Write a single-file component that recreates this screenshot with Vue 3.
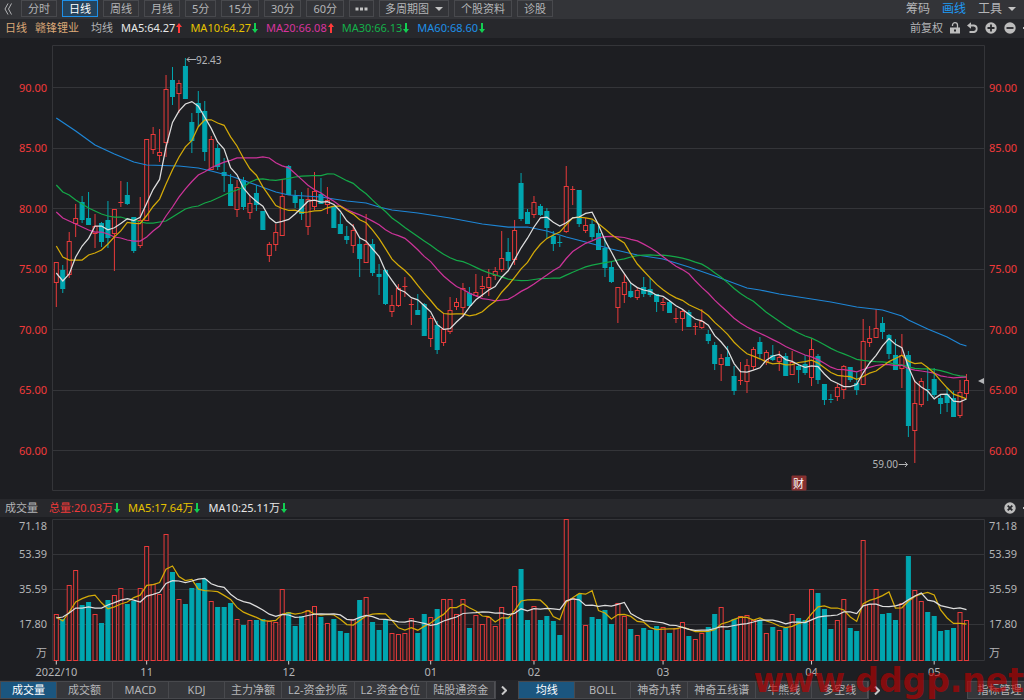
<script setup>
const STEP = 6.455
const X0 = 56.3
const xAt = (i) => X0 + i * STEP

// direction, high, body top, body bottom, low (plot coordinates)
const candleSource = `
R 262 262 282 306 G 265 270 288 292 R 232 241 274 277 R 204 218 223 236 G 196 202 219 222
G 192 218 224 224 R 214 226 233 247 G 222 223 241 246 G 201 220 237 247 R 209 209 233 270
R 181 202 202 206 G 182 195 203 204 G 217 217 250 252 R 197 220 245 247 R 139 139 220 220
R 127 134 149 153 R 129 152 155 161 R 75 89 142 156 G 67 80 96 104 R 80 83 93 112
G 58 66 98 98 G 113 122 140 152 G 91 103 112 126 G 101 111 151 160 R 136 139 169 169
G 144 148 166 169 G 158 172 175 191 G 174 184 205 205 R 180 187 209 216 G 177 180 206 209
R 195 203 212 218 G 185 193 204 210 G 211 211 229 229 R 242 244 255 261 R 224 232 244 250
R 180 196 235 235 G 165 166 194 194 G 190 196 202 207 G 192 199 213 219 R 188 199 226 234
R 172 191 206 209 G 178 194 203 203 R 187 200 204 213 G 206 206 227 227 G 213 224 233 233
G 226 236 239 243 R 224 230 245 252 G 237 244 258 276 R 214 244 262 262 G 239 244 272 275
G 264 274 276 294 G 269 270 303 304 R 295 305 311 316 R 284 288 305 306 R 277 286 286 296
R 299 304 304 324 G 294 310 314 314 G 303 304 335 335 R 316 318 338 346 G 321 325 349 353
R 313 329 342 345 R 297 310 331 333 R 298 302 306 309 R 283 288 307 316 G 287 293 305 307
R 274 292 295 295 R 276 286 288 296 R 269 277 287 295 R 267 271 275 279 R 231 258 269 271
G 238 252 260 268 R 220 230 259 264 G 173 183 218 220 G 209 212 223 223 R 196 202 214 217
G 204 206 214 215 G 208 211 227 237 G 231 236 243 250 G 236 242 242 246 R 166 186 231 232
R 186 189 189 204 G 190 190 223 226 R 218 225 230 232 G 220 224 236 239 G 224 233 249 249
G 237 248 267 276 G 261 267 281 282 R 287 287 307 322 R 274 282 294 302 G 283 291 296 297
R 287 290 297 299 G 277 287 293 296 G 278 289 294 296 G 294 294 301 311 R 298 302 304 310
G 300 302 312 312 R 308 318 318 322 R 309 311 318 330 G 310 312 326 326 R 323 326 326 334
R 309 321 327 328 G 330 334 340 343 G 342 345 363 369 R 354 358 364 380 G 346 357 365 365
G 366 376 390 394 R 362 380 380 384 R 359 365 381 392 R 347 349 366 369 G 337 342 353 358
R 350 352 361 364 G 345 355 359 360 R 351 357 361 370 G 353 356 375 375 R 351 362 374 374
G 364 366 369 382 G 355 364 372 374 R 338 349 377 385 G 354 356 379 383 G 384 384 399 404
G 394 399 400 402 R 384 387 396 400 R 365 366 389 398 G 367 367 379 381 G 372 383 389 394
R 319 341 384 384 R 326 338 342 346 R 309 328 337 337 G 317 323 331 338 G 334 335 353 358
G 339 355 369 369 R 334 355 368 387 G 351 355 425 436 R 380 403 430 462 R 378 381 404 406
G 368 389 389 400 G 368 379 394 396 G 395 398 403 413 G 388 394 402 411 G 391 398 416 416
R 380 392 415 417 R 374 380 393 397`.trim().split(/\s+/)

const volumeTops = [
  614, 619, 585, 570, 605, 602, 614, 623, 600, 595, 588, 604, 601, 588, 546, 584, 594, 534, 572, 599,
  604, 588, 583, 579, 601, 607, 607, 603, 619, 625, 620, 620, 619, 621, 622, 589, 612, 626, 616, 610,
  606, 617, 623, 619, 631, 633, 619, 600, 597, 622, 630, 620, 633, 634, 633, 618, 633, 614, 617, 609,
  599, 599, 614, 599, 628, 615, 624, 617, 626, 607, 617, 586, 569, 620, 606, 620, 616, 621, 635, 519,
  598, 594, 625, 617, 619, 610, 624, 603, 616, 629, 635, 628, 630, 626, 627, 633, 628, 622, 636, 639,
  633, 627, 614, 607, 630, 619, 616, 615, 620, 620, 633, 627, 630, 628, 614, 618, 620, 589, 593, 609,
  629, 620, 599, 628, 631, 540, 604, 589, 614, 613, 620, 603, 556, 590, 601, 612, 616, 631, 630, 628,
  612, 620
]

const candles = volumeTops.map((v, i) => {
  const [dir, high, top, bottom, low] = candleSource.slice(i * 5, i * 5 + 5)
  return { x: xAt(i), up: dir === 'R', high: +high, top: +top, bottom: +bottom, low: +low, v }
})
const closes = candles.map((c) => (c.up ? c.top : c.bottom) + 0.4)

// Moving average; seed values cover the bars before the window fills up.
function average(values, n, seed) {
  return values.map((_, i) => {
    if (i < seed.length) return seed[i]
    return values.slice(i - n + 1, i + 1).reduce((a, b) => a + b, 0) / n
  })
}
const toPoints = (ys) => ys.map((y, i) => `${xAt(i).toFixed(1)},${y.toFixed(1)}`).join(' ')

const ma60 = [[0, 118], [3, 131], [6, 145], [9, 154], [12, 162], [14, 165], [19, 166], [22, 168], [24, 171],
  [27, 176], [31, 185], [34, 192], [36, 195], [41, 197], [45, 201], [48, 203], [50, 207], [52, 210], [56, 213],
  [61, 218], [66, 224], [70, 227], [73, 227], [76, 231], [79, 237], [82, 242], [86, 249], [90, 255], [94, 259],
  [98, 267], [102, 276], [107, 288], [109, 290], [112, 294], [116, 298], [120, 302], [124, 307], [128, 310],
  [131, 316], [132, 320], [135, 329], [138, 337], [140, 344], [141, 346]]
  .map(([i, y]) => `${xAt(i).toFixed(1)},${y}`).join(' ')

const priceLines = [
  { cls: 'blue', points: ma60 },
  {
    cls: 'green',
    points: toPoints(average(closes, 30, [185, 192, 195, 200, 204, 208, 211, 214, 216, 217, 217, 219, 220, 222,
      223, 223, 222, 221, 217, 213, 209, 207, 206, 203, 201, 198, 195, 192, 190, 187]))
  },
  {
    cls: 'pink',
    points: toPoints(average(closes, 20, [212, 218, 221, 224, 227, 230, 232, 232, 234, 237, 238, 240, 241, 241,
      237, 231, 226, 216, 207]))
  },
  { cls: 'yellow', points: toPoints(average(closes, 10, [246, 257, 260, 260, 260, 255, 253, 250, 244])) },
  { cls: 'white', points: toPoints(average(closes, 5, [273, 281, 274, 257])) }
]
const volumeLines = [
  { cls: 'yellow', points: toPoints(average(volumeTops, 5, [617, 621, 612, 602])) },
  { cls: 'white', points: toPoints(average(volumeTops, 10, [618, 617, 613, 608, 608, 607, 608, 608, 605])) }
]

const priceTicks = [90, 85, 80, 75, 70, 65, 60].map((p) => ({ label: p.toFixed(2), y: 87.5 + (90 - p) * 12.1 }))
const priceTop = (y) => ({ top: ((y - 38) / 461) * 100 + '%' })
const volumeTicks = [['71.18', 526], ['53.39', 554], ['35.59', 589], ['17.80', 624], ['万', 653]]
const volumeTop = (y) => ({ top: ((y - 517) / 163) * 100 + '%' })
const plotLeft = (x) => ({ left: ((x - 52) / 933) * 100 + '%' })
const months = [['2022/10', 0], ['11', 14], ['12', 36], ['01', 58], ['02', 74], ['03', 94], ['04', 117], ['05', 136]]

const periods = ['分时', '日线', '周线', '月线', '5分', '15分', '30分', '60分']
const averages = [
  ['MA5:64.27', 'white', true], ['MA10:64.27', 'yellow', false], ['MA20:66.08', 'pink', true],
  ['MA30:66.13', 'green', false], ['MA60:68.60', 'blue', false]
]
const volumeStats = [['总量:20.03万', 'red'], ['MA5:17.64万', 'yellow'], ['MA10:25.11万', 'white']]
const lowerTabs = ['成交量', '成交额', 'MACD', 'KDJ', '主力净额', 'L2-资金抄底', 'L2-资金仓位', '陆股通资金']
const upperTabs = ['均线', 'BOLL', '神奇九转', '神奇五线谱', '牛熊线', '多空线']
</script>

<template>
  <main class="terminal">
    <nav class="toolbar">
      <button class="plain collapse" aria-label="收起">
        <svg width="8" height="12" viewBox="0 0 8 12"><path d="M4 0.5 L1 6 L4 11.5 M7.5 0.5 L4.500 6 L7.500 11.5" /></svg>
      </button>
      <button v-for="p in periods" :key="p" class="period" :class="{ active: p === '日线' }">{{ p }}</button>
      <button class="period more" aria-label="更多">
        <svg class="dots" width="13" height="4" viewBox="0 0 13 4"><path d="M0.500 0.500h3v3h-3z M5 0.500h3v3h-3z M9.500 0.500h3v3h-3z" /></svg>
      </button>
      <button class="period menu">多周期图<i class="caret"></i></button>
      <button class="period">个股资料</button>
      <button class="period">诊股</button>
      <div class="tools">
        <button class="plain">筹码</button>
        <button class="plain on">画线</button>
        <button class="plain">工具<i class="caret"></i></button>
      </div>
    </nav>

    <header class="info price-info">
      <span class="gold">日线</span>
      <span class="gold name">赣锋锂业</span>
      <span class="label">均线</span>
      <span v-for="[text, color, up] in averages" :key="text" class="stat" :class="color">{{ text
        }}<svg class="arrow" :class="up ? 'up' : 'down'" width="6" height="10" viewBox="0 0 6 10"><path :d="up ? 'M3 0 L6 4 H4 V10 H2 V4 H0Z' : 'M3 10 L6 6 H4 V0 H2 V6 H0Z'" /></svg></span>
      <div class="actions">
        <button class="plain">前复权</button>
        <button class="plain" aria-label="锁定">
          <svg width="10" height="12" viewBox="0 0 10 12"><path d="M2.500 4 V3 A2.500 2.300 0 0 1 7.500 3 V6" fill="none" stroke="#bdbdbd" stroke-width="1.300" /><path d="M0 5.500H10V11.500H0Z M4 7.500V9.500H6V7.500Z" fill="#bdbdbd" fill-rule="evenodd" /></svg>
        </button>
        <button class="plain" aria-label="撤销">
          <svg width="11" height="12" viewBox="0 0 11 12"><path d="M2 3.500H7A3.300 3.300 0 0 1 7 10H2.500" fill="none" stroke="#bdbdbd" stroke-width="1.800" /><path d="M0 3.500L4 0.300V6.700Z" fill="#bdbdbd" /></svg>
        </button>
        <button class="plain" aria-label="放大">
          <svg width="12" height="12" viewBox="0 0 12 12"><circle cx="6" cy="6" r="5.700" fill="#bdbdbd" /><path d="M6 2.500V9.500M2.500 6H9.500" stroke="#27282c" stroke-width="1.800" /></svg>
        </button>
        <button class="plain" aria-label="缩小">
          <svg width="12" height="12" viewBox="0 0 12 12"><circle cx="6" cy="6" r="5.700" fill="#bdbdbd" /><path d="M2.500 6H9.500" stroke="#27282c" stroke-width="1.800" /></svg>
        </button>
        <i class="edge"></i>
      </div>
    </header>

    <section class="chart">
      <div class="axis left red">
        <span v-for="t in priceTicks" :key="t.label" :style="priceTop(t.y)">{{ t.label }}</span>
      </div>
      <div class="plot">
        <svg class="canvas" viewBox="52 38 933 461" preserveAspectRatio="none">
          <path class="grid" d="M52.500 45.500H984.500V490.500H52.500Z" />
          <path v-for="t in priceTicks" :key="t.label" class="grid" :d="`M52 ${Math.floor(t.y) + 0.5}H984`" />
          <g v-for="(c, i) in candles" :key="i" :class="c.up ? 'rise' : 'fall'">
            <path :d="`M${c.x} ${c.high}V${c.top + 0.5}M${c.x} ${c.bottom + 0.5}V${c.low + 1}`" />
            <rect v-if="c.bottom - c.top > 1" :x="c.x - 2" :y="c.top + 0.5" width="4" :height="c.bottom - c.top" />
            <path v-else :d="`M${c.x - 2.5} ${c.top + 0.5}h5`" />
          </g>
          <polyline v-for="l in priceLines" :key="l.cls" class="line" :class="l.cls" :points="l.points" />
        </svg>
        <span class="mark high" :style="{ ...priceTop(60), ...plotLeft(186) }"><svg width="10" height="7" viewBox="0 0 10 7"><path d="M10 3.500H1M3.500 1L1 3.500L3.500 6" /></svg>92.43</span>
        <span class="mark low" :style="{ ...priceTop(464), ...plotLeft(908) }">59.00<svg width="10" height="7" viewBox="0 0 10 7"><path d="M0 3.500H9M6.500 1L9 3.500L6.500 6" /></svg></span>
        <span class="report" :style="{ ...priceTop(483), ...plotLeft(798.5) }">财</span>
        <i class="pointer" :style="priceTop(380.5)"></i>
      </div>
      <div class="axis right red">
        <span v-for="t in priceTicks" :key="t.label" :style="priceTop(t.y)">{{ t.label }}</span>
      </div>
    </section>

    <header class="info volume-info">
      <span class="label first">成交量</span>
      <span v-for="[text, color] in volumeStats" :key="text" class="stat" :class="color">{{ text
        }}<svg class="arrow down" width="6" height="10" viewBox="0 0 6 10"><path d="M3 10 L6 6 H4 V0 H2 V6 H0Z" /></svg></span>
      <div class="actions">
        <button class="plain" aria-label="关闭">
          <svg width="12" height="12" viewBox="0 0 12 12"><circle cx="6" cy="6" r="5.700" fill="#bdbdbd" /><path d="M3.700 3.700L8.300 8.300M8.300 3.700L3.700 8.300" stroke="#27282c" stroke-width="1.800" /></svg>
        </button>
        <i class="edge"></i>
      </div>
    </header>

    <section class="chart">
      <div class="axis left">
        <span v-for="[t, y] in volumeTicks" :key="t" :style="volumeTop(y)">{{ t }}</span>
      </div>
      <div class="plot">
        <svg class="canvas" viewBox="52 517 933 163" preserveAspectRatio="none">
          <path class="grid" d="M52.500 519.500H984.500V660.500H52.500Z M52 554.500H984 M52 589.500H984 M52 624.500H984" />
          <g v-for="(c, i) in candles" :key="i" :class="c.up ? 'rise' : 'fall'">
            <rect :x="c.x - 2" :y="c.v + 0.5" width="4" :height="660 - c.v" />
          </g>
          <path v-for="[m, i] in months" :key="m" class="tick" :d="`M${xAt(i)} 661V664.500`" />
          <polyline v-for="l in volumeLines" :key="l.cls" class="line" :class="l.cls" :points="l.points" />
        </svg>
        <span v-for="[m, i] in months" :key="m" class="month" :style="{ ...volumeTop(672), ...plotLeft(xAt(i)) }">{{ m }}</span>
      </div>
      <div class="axis right">
        <span v-for="[t, y] in volumeTicks" :key="t" :style="volumeTop(y)">{{ t }}</span>
      </div>
    </section>

    <nav class="tabs">
      <button v-for="t in lowerTabs" :key="t" :class="{ active: t === '成交量' }">{{ t }}</button>
      <button class="next" aria-label="更多副图"><svg width="6" height="9" viewBox="0 0 6 9"><path d="M1 0.500L5 4.500L1 8.500" /></svg></button>
      <button v-for="t in upperTabs" :key="t" :class="{ active: t === '均线' }">{{ t }}</button>
      <button class="next" aria-label="更多主图"><svg width="6" height="9" viewBox="0 0 6 9"><path d="M1 0.500L5 4.500L1 8.500" /></svg></button>
      <button class="manage">指标管理</button>
    </nav>
    <div class="watermark">www.ddgp.net</div>
  </main>
</template>

<style>
body {
  margin: 0;
  background: #1d1e22;
}
</style>

<style scoped>
.terminal {
  position: relative;
  display: grid;
  grid-template-columns: minmax(0, 1fr);
  grid-template-rows: 19px 19px minmax(0, 461fr) 18px minmax(0, 163fr) 20px;
  height: 100vh;
  overflow: hidden;
  background: #1d1e22;
  color: #b4b5b7;
  font: 11px/16px "Noto Sans", "Noto Sans CJK SC", sans-serif;
  white-space: nowrap;
}
button {
  box-sizing: border-box;
  margin: 0;
  padding: 0;
  border: 0;
  background: none;
  color: inherit;
  font: inherit;
  white-space: nowrap;
}
.toolbar {
  display: flex;
  align-items: center;
  gap: 5px;
  padding: 0 8px 2px 4px;
  background: #333438;
}
.period {
  height: 17px;
  padding: 0 6px;
  border: 1px solid #48494d;
  line-height: 15px;
}
.period.active {
  border-color: #1e8fe6;
  background: #25435c;
  color: #fff;
}
.more,
.menu {
  padding: 0 5px;
}
.caret {
  display: inline-block;
  margin-left: 6px;
  border: 4px solid transparent;
  border-top-color: #c4c4c4;
  border-bottom: 0;
  vertical-align: 2px;
}
.collapse {
  width: 12px;
  text-align: left;
}
.collapse svg,
.dots,
.actions svg {
  display: block;
}
.collapse path {
  fill: none;
  stroke: #b4b5b7;
}
.dots path {
  fill: #c4c4c4;
}
.tools {
  display: flex;
  gap: 12px;
  margin-left: auto;
  font-size: 12px;
}
.tools .on {
  color: #1e9bf5;
}
.info {
  display: flex;
  align-items: center;
  gap: 8px;
  padding-left: 5px;
  background: #27282c;
}
.price-info {
  padding-bottom: 2px;
}
.gold {
  color: #dca878;
}
.name {
  margin-right: 4px;
}
.first {
  margin-right: 3px;
}
.stat {
  display: flex;
  align-items: center;
}
.arrow {
  margin-left: 1px;
}
.arrow.up {
  fill: #ff3a3a;
}
.arrow.down {
  fill: #12d052;
}
.actions {
  display: flex;
  align-items: center;
  gap: 7px;
  margin-left: auto;
}
.edge {
  width: 1px;
  height: 2px;
  background: #bdbdbd;
}
span.white { color: #e8e8e8; }
span.yellow { color: #e6c200; }
span.pink { color: #d8349e; }
span.green { color: #14b04a; }
span.blue { color: #1e8fe6; }
span.red, .axis.red { color: #f03a3a; }
.chart {
  display: grid;
  grid-template-columns: 52px minmax(0, 1fr) 39px;
  min-height: 0;
}
.axis,
.plot {
  position: relative;
  min-height: 0;
}
.axis span {
  position: absolute;
  transform: translateY(-50%);
}
.axis.left span {
  right: 5px;
}
.axis.right span {
  left: 4px;
}
.canvas {
  display: block;
  width: 100%;
  height: 100%;
}
.grid {
  fill: none;
  stroke: #343539;
}
.rise {
  fill: #1d1e22;
  stroke: #e83a3a;
}
.fall {
  fill: #00a6b0;
  stroke: #00a6b0;
}
.tick {
  stroke: #d0d0d0;
}
.line {
  fill: none;
  stroke-width: 1.25;
}
.line.white { stroke: #dedede; }
.line.yellow { stroke: #d4aa08; }
.line.pink { stroke: #cc3399; }
.line.green { stroke: #14a848; }
.line.blue { stroke: #1e86d6; }
.mark {
  position: absolute;
  display: flex;
  align-items: center;
  font-size: 10px;
  transform: translateY(-50%);
}
.mark.low {
  transform: translate(-100%, -50%);
}
.mark path {
  fill: none;
  stroke: #b4b5b7;
}
.report {
  position: absolute;
  width: 15px;
  height: 15px;
  border-radius: 1px;
  background: #863030;
  color: #fff;
  line-height: 15px;
  text-align: center;
  transform: translate(-50%, -50%);
}
.pointer {
  position: absolute;
  right: 1px;
  border: 3px solid transparent;
  border-left: 0;
  border-right: 6px solid #b4b5b7;
  transform: translateY(-50%);
}
.month {
  position: absolute;
  transform: translate(-50%, -50%);
}
.tabs {
  display: flex;
  align-items: center;
  padding-left: 1px;
  background: #242529;
}
.tabs button {
  flex: none;
  min-width: 56px;
  height: 16px;
  padding: 0 6px;
  border-right: 1px solid #505155;
  background: #36373b;
  line-height: 16px;
  box-shadow: 0 0 0 1px #48494d;
}
.tabs .active {
  background: #1b567f;
  color: #fff;
}
.tabs .next {
  display: flex;
  align-items: center;
  justify-content: center;
  min-width: 24px;
  padding: 0 8px 0 2px;
  border: 0;
  background: none;
  box-shadow: none;
}
.next path {
  fill: none;
  stroke: #c8c8c8;
  stroke-width: 2;
}
.tabs .manage {
  margin-left: auto;
  padding: 0 1px 0 8px;
  border: 0;
}
.watermark {
  position: absolute;
  right: 0;
  bottom: 0;
  color: rgba(190, 0, 0, 0.65);
  font: bold 33px/38px "DejaVu Sans", sans-serif;
  pointer-events: none;
}
</style>
